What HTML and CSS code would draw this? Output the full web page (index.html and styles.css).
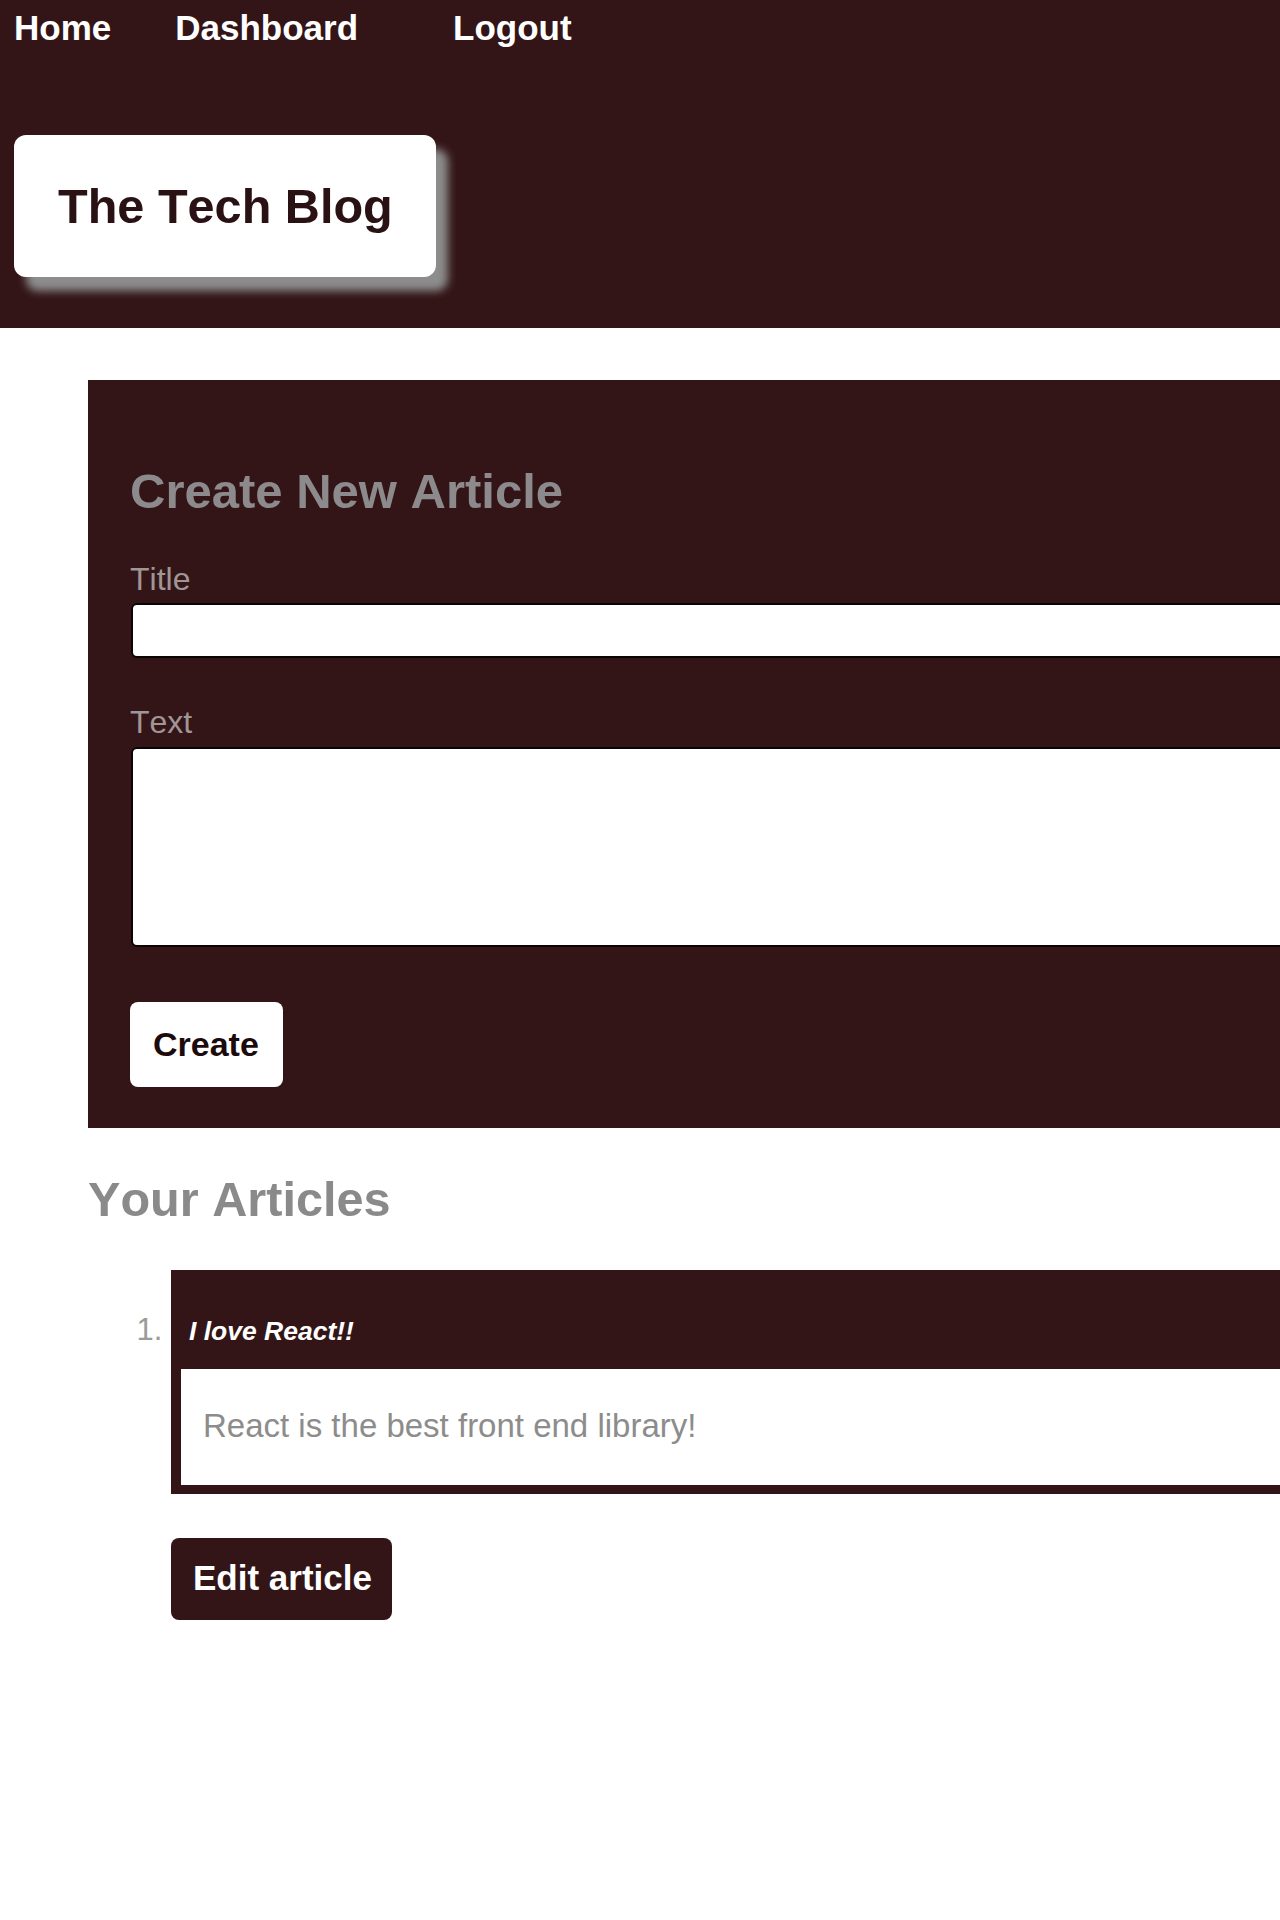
FILE: index.html
```html
<!DOCTYPE html>
<html lang="en">
<head>
<meta charset="utf-8">
<title>The Tech Blog - Dashboard</title>
<link rel="stylesheet" href="styles.css">
</head>
<body>
<header class="site-header">
  <nav class="nav">
    <a class="nav-link nav-home" href="#">Home</a>
    <a class="nav-link nav-dash" href="#">Dashboard</a>
    <a class="nav-link nav-logout" href="#">Logout</a>
  </nav>
  <div class="logo">The Tech Blog</div>
</header>

<main class="main">
  <section class="create-panel">
    <h2 class="panel-title">Create New Article</h2>
    <label class="field-label" for="title">Title</label>
    <input class="field-input" id="title" type="text">
    <label class="field-label field-label-text" for="text">Text</label>
    <textarea class="field-textarea" id="text"></textarea>
    <button class="btn-create" type="button">Create</button>
  </section>

  <h2 class="articles-title">Your Articles</h2>
  <ol class="article-list">
    <li class="article-item">
      <div class="article-card">
        <h3 class="article-name">I love React!!</h3>
        <p class="article-body">React is the best front end library!</p>
      </div>
      <button class="btn-edit" type="button">Edit article</button>
    </li>
  </ol>
</main>
</body>
</html>
```

FILE: styles.css
```css
html, body {
  margin: 0;
  padding: 0;
  background: #ffffff;
  overflow-x: hidden;
}

body {
  font-family: "Liberation Sans", Arial, sans-serif;
  font-kerning: none;
  width: 1280px;
}

.site-header {
  background: #331517;
  height: 328px;
  box-sizing: border-box;
  padding-top: 5px;
}

.nav {
  display: flex;
  align-items: baseline;
  padding-left: 14px;
  height: 46px;
}

.nav-link {
  color: #ffffff;
  text-decoration: none;
  font-weight: bold;
  font-size: 35px;
  line-height: 46px;
}

.nav-home { margin-right: 64px; }
.nav-dash { margin-right: 95px; }

.logo {
  display: inline-block;
  margin: 84px 0 0 14px;
  white-space: nowrap;
  padding: 43px 43px 43px 44px;
  background: #ffffff;
  border-radius: 12px;
  color: #2a1214;
  font-weight: bold;
  font-size: 48.6px;
  line-height: 56px;
  box-shadow: 12px 14px 9px #8d8d8d;
}

.main {
  padding-left: 88px;
}

.create-panel {
  margin-top: 52px;
  margin-right: -300px;
  background: #331517;
  padding: 83px 0 41px 42px;
  display: flex;
  flex-direction: column;
  align-items: flex-start;
}

.panel-title {
  margin: 0 0 42px 0;
  font-size: 49px;
  line-height: 56px;
  font-weight: bold;
  color: #8c8a8c;
}

.field-label {
  font-size: 32px;
  line-height: 36px;
  color: #a09696;
  margin-bottom: 6px;
}

.field-label-text {
  margin-top: 46px;
  margin-bottom: 7px;
}

.field-input,
.field-textarea {
  box-sizing: border-box;
  margin: 0 0 0 1px;
  width: 1400px;
  background: #ffffff;
  border: 2px solid #0c0404;
  border-radius: 6px;
  font: inherit;
  resize: none;
}

.field-input {
  height: 55px;
}

.field-textarea {
  height: 200px;
  display: block;
}

.btn-create {
  margin-top: 55px;
  font-family: inherit;
  font-kerning: none;
  font-weight: bold;
  font-size: 34px;
  line-height: 40px;
  color: #1c0b0c;
  background: #ffffff;
  border: none;
  border-radius: 8px;
  padding: 22px 24px 23px 23px;
}

.articles-title {
  margin: 44px 0 0 0;
  font-size: 48.6px;
  line-height: 54px;
  font-weight: bold;
  color: #8a8a8a;
}

.article-list {
  margin: 44px 0 0 0;
  padding: 0 0 0 83px;
  color: #9a9a9a;
  font-size: 31px;
}

.article-card {
  background: #331517;
  margin-right: -300px;
  padding: 46px 0 9px 0;
}

.article-name {
  margin: 0 0 23px 18px;
  font-size: 26.5px;
  line-height: 30px;
  font-weight: bold;
  font-style: italic;
  color: #ffffff;
}

.article-body {
  margin: 0 0 0 10px;
  background: #ffffff;
  padding: 38px 0 40px 22px;
  font-size: 33px;
  line-height: 38px;
  color: #8c8c8c;
}

.btn-edit {
  margin-top: 44px;
  font-family: inherit;
  font-kerning: none;
  font-weight: bold;
  font-size: 35px;
  line-height: 40px;
  color: #ffffff;
  background: #331517;
  border: none;
  border-radius: 8px;
  padding: 20px 20px 22px 22px;
}
```
